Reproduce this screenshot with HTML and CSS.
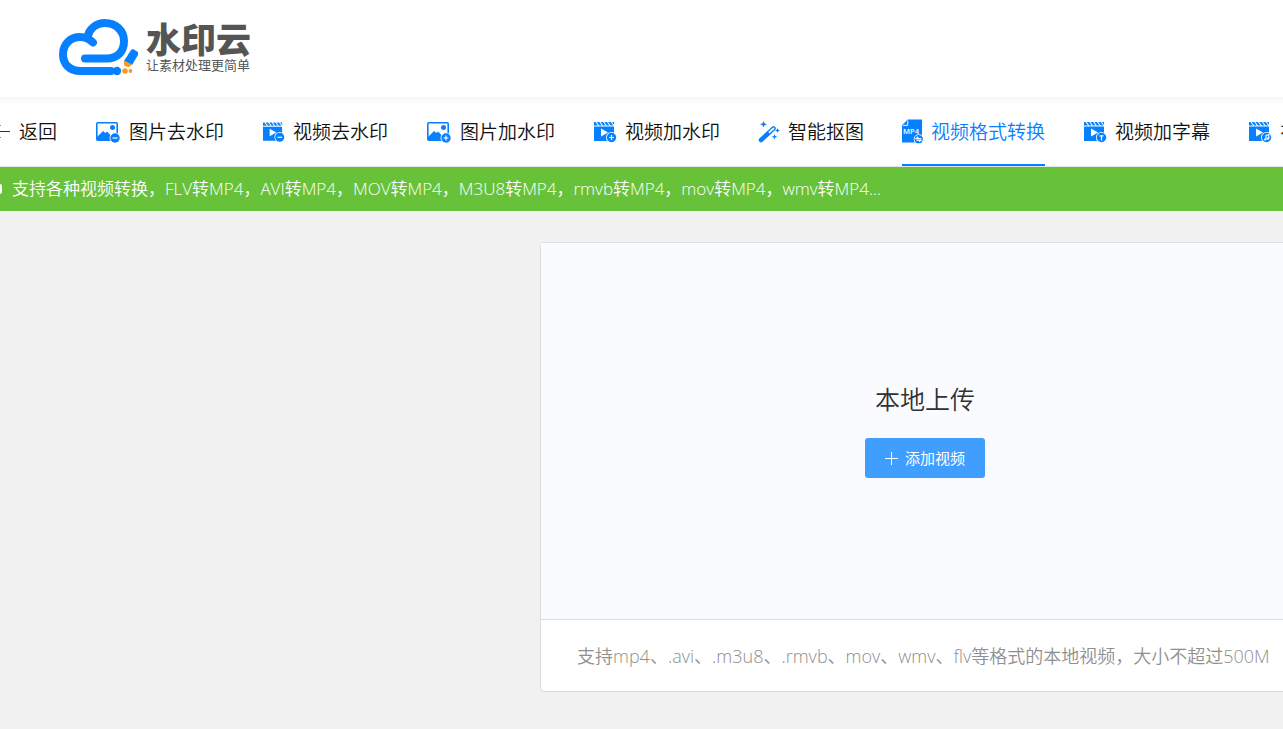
FILE: index.html
```html
<!DOCTYPE html>
<html lang="zh-CN">
<head>
<meta charset="utf-8">
<title>水印云 - 视频格式转换</title>
<link rel="stylesheet" href="styles.css">
</head>
<body>
<svg class="defs" aria-hidden="true">
  <symbol id="picture" viewBox="0 0 26 22">
    <rect x="1.800" y="1.800" width="20.400" height="17.400" rx="1" fill="none" stroke="currentColor" stroke-width="1.600"/>
    <path d="M2 16l6-6 2.500 2L12 10.500l4 4 2-1.500 4 3v3H2z" fill="currentColor"/>
    <circle cx="17.500" cy="6.500" r="2.500" fill="currentColor"/>
    <circle cx="20" cy="17" r="5.500" fill="#fff"/><circle cx="20" cy="17" r="4.700" fill="currentColor"/>
  </symbol>
  <symbol id="film" viewBox="0 0 24 22">
    <path d="M1 1h1.500l2.500 3.500H1zM3.700 1h2.600l2.500 3.500H6.200zM7.500 1h2.600l2.500 3.500H10zM11.300 1h2.600l2.500 3.500h-2.600zM15.100 1h2.600l2.500 3.500h-2.600zM18.900 1H21v3zM1 5.500h20V20H1z" fill="currentColor"/>
    <path d="M8 7.500v8l7-4z" fill="#fff"/>
    <circle cx="18.500" cy="16.500" r="5.500" fill="#fff"/><circle cx="18.500" cy="16.500" r="4.700" fill="currentColor"/>
  </symbol>
</svg>
<header class="header">
  <a class="brand" href="#">
    <svg class="brand-mark" viewBox="0 0 80 58" aria-hidden="true">
      <path d="M53 52H22.500C11 52 5 44.500 5 35.500 5 25 12.500 18 22 18c5 0 9 1.500 13 5.500M29.500 18C31 10 38 4 47 4 58 4 66 12 66 22c0 11-7 17.500-17 17.500H27" fill="none" stroke="#0780ff" stroke-width="8" stroke-linecap="round"/>
      <circle cx="59" cy="52" r="4.200" fill="#0780ff"/>
      <path d="M73 31l2-1 5 3v3l-6 10-8-4z" fill="#0780ff"/>
      <path d="M66 41.500l8 4-3 2.500c-4 0-6-2-5-6.500z" fill="#fc9725"/>
      <circle cx="67" cy="52" r="2.800" fill="#fc9725"/><circle cx="72.500" cy="52" r="1.900" fill="#fc9725"/>
    </svg>
    <span class="brand-text">
      <strong class="brand-name">水印云</strong>
      <span class="brand-slogan">让素材处理更简单</span>
    </span>
  </a>
</header>
<nav class="nav" aria-label="工具">
  <a class="nav-item" href="#"><svg class="icon-back" viewBox="0 0 11 22" aria-hidden="true"><path d="M0 10.500h10" stroke="#333"/><path d="M0 4.500h1M0 16.500h1" stroke="#409eff"/></svg>返回</a>
  <a class="nav-item" href="#"><svg class="icon icon-picture" viewBox="0 0 26 22" aria-hidden="true"><use href="#picture"/><path d="M17.500 17h5" class="mark"/></svg>图片去水印</a>
  <a class="nav-item" href="#"><svg class="icon icon-film-small" viewBox="0 0 24 22" aria-hidden="true"><use href="#film"/><path d="M16 16.500h5" class="mark"/></svg>视频去水印</a>
  <a class="nav-item" href="#"><svg class="icon icon-picture" viewBox="0 0 26 22" aria-hidden="true"><use href="#picture"/><path d="M17.500 17h5M20 14.500v5" class="mark"/></svg>图片加水印</a>
  <a class="nav-item" href="#"><svg class="icon" viewBox="0 0 24 22" aria-hidden="true"><use href="#film"/><path d="M16 16.500h5M18.500 14v5" class="mark"/></svg>视频加水印</a>
  <a class="nav-item" href="#"><svg class="icon icon-wand" viewBox="0 0 22 22" aria-hidden="true"><path d="M3 19L15.500 7.500" stroke="currentColor" stroke-width="4.500" stroke-linecap="round"/><path d="M11.500 11.200L15.500 7.500" stroke="#fff" stroke-width="1.800" stroke-linecap="round"/><path d="M5.500 0l1 2.200L9 3.200l-2.500 1-1 2.300-1-2.300-2.500-1 2.500-1zM19.500 7l.8 1.700 1.700.8-1.700.8-.8 1.700-.8-1.700-1.700-.8 1.700-.8zM16.500 13l.8 2 2 .8-2 .8-.8 2-.8-2-2-.8 2-.8z" fill="currentColor"/></svg>智能抠图</a>
  <a class="nav-item nav-item-active" href="#" aria-current="page"><svg class="icon icon-mp4" viewBox="0 0 22 26" aria-hidden="true"><path d="M6 0h15v24H0V6z" fill="currentColor"/><path d="M1 6h5V1" fill="none" stroke="#fff"/><text x="1" y="15" class="mp4-label">MP4</text><circle cx="17.500" cy="20.500" r="5.200" fill="#fff"/><circle cx="17.500" cy="20.500" r="4.400" fill="currentColor"/><path d="M20 19.800h-5l2-1.800M15 21.500h5l-2 1.600" class="mark"/></svg>视频格式转换</a>
  <a class="nav-item" href="#"><svg class="icon" viewBox="0 0 24 22" aria-hidden="true"><use href="#film"/><path d="M16.500 14.800h4M18.500 15v4.500" class="mark"/></svg>视频加字幕</a>
  <a class="nav-item" href="#"><svg class="icon" viewBox="0 0 24 22" aria-hidden="true"><use href="#film"/><path d="M18 18.500v-4l2.800-.8v4" class="mark"/><circle cx="17.200" cy="18.500" r="1.100" fill="#fff"/><circle cx="20" cy="17.700" r="1.100" fill="#fff"/></svg>视频加音乐</a>
</nav>
<div class="notice"><span class="notice-dot"></span><p class="notice-text">支持各种视频转换，FLV转MP4，AVI转MP4，MOV转MP4，M3U8转MP4，rmvb转MP4，mov转MP4，wmv转MP4...</p></div>
<main class="main">
  <section class="panel">
    <div class="upload">
      <h1 class="upload-title">本地上传</h1>
      <button class="upload-button" type="button"><svg class="plus" viewBox="0 0 14 14" aria-hidden="true"><path d="M6.500 1v13M0 7.500h13" stroke="#fff"/></svg><span class="upload-label">添加视频</span></button>
    </div>
    <p class="hint">支持mp4、.avi、.m3u8、.rmvb、mov、wmv、flv等格式的本地视频，大小不超过500M</p>
  </section>
</main>
</body>
</html>
```
FILE: styles.css
```css
* { box-sizing: border-box; }
body {
  margin: 0;
  min-height: 100vh;
  overflow-x: hidden;
  background: #f1f1f1;
  color: #111;
  font-family: "Open Sans", "Noto Sans CJK SC", sans-serif;
}
.defs { display: none; }
.header { background: #fff; padding: 18px 58px; }
.brand { display: flex; align-items: flex-start; gap: 8px; height: 61px; color: #555; text-decoration: none; }
.brand-mark { width: 80px; height: 58px; flex: none; margin-top: 1px; }
.brand-text { display: flex; flex-direction: column; padding-top: 4px; }
.brand-name { font-size: 35px; line-height: 36px; font-weight: 900; }
.brand-slogan { font-size: 13px; line-height: 14px; }
.nav {
  display: flex;
  gap: 38px;
  height: 70px;
  overflow: hidden;
  background: linear-gradient(#f7f7f7, #fff 8px);
  border-bottom: 1px solid #e4e4e4;
}
.nav-item {
  display: flex;
  flex: none;
  align-items: center;
  gap: 8px;
  padding-top: 2px;
  border-bottom: 2px solid transparent;
  color: #111;
  font-size: 19px;
  font-weight: 350;
  line-height: 28px;
  text-decoration: none;
}
.nav-item-active { color: #0780ff; border-bottom-color: #0780ff; }
.icon { width: 24px; height: 22px; color: #0780ff; }
.icon-picture { width: 26px; }
.icon-film-small { width: 23px; }
.icon-wand { width: 22px; }
.icon-mp4 { width: 21px; height: 26px; }
.icon-back { width: 11px; height: 22px; }
.mark { fill: none; stroke: #fff; stroke-width: 1.2; }
.mp4-label { fill: #fff; font: 600 8px "Open Sans", sans-serif; }
.notice { display: flex; align-items: center; gap: 10px; height: 44px; overflow: hidden; background: #67c23a; color: #fff; }
.notice-dot { width: 2px; height: 10px; border-radius: 0 2px 2px 0; background: #fff; }
.notice-text { margin: 0; font-size: 17px; font-weight: 350; line-height: 24px; white-space: nowrap; }
.main { padding: 31px 0 37px 540px; }
.panel { width: 770px; border: 1px solid #dcdcdc; border-radius: 4px; background: #fff; }
.upload {
  display: flex;
  flex-direction: column;
  align-items: center;
  gap: 20px;
  padding: 138px 0 141px;
  border-bottom: 1px solid #dcdcdc;
  background: #fafbff;
}
.upload-title { margin: 0; font-size: 25px; line-height: 37px; font-weight: 350; color: #303133; }
.upload-button {
  display: flex;
  align-items: center;
  gap: 6px;
  height: 40px;
  padding: 0 20px;
  border: 0;
  border-radius: 3px;
  background: #409eff;
  color: #fff;
  font: 15px "Open Sans", "Noto Sans CJK SC", sans-serif;
}
.upload-label { padding-bottom: 2px; }
.plus { width: 14px; height: 14px; }
.hint { margin: 0; padding: 23px 36px 21px; color: #8f8f8f; font-size: 18px; line-height: 27px; font-weight: 350; white-space: nowrap; }
```
